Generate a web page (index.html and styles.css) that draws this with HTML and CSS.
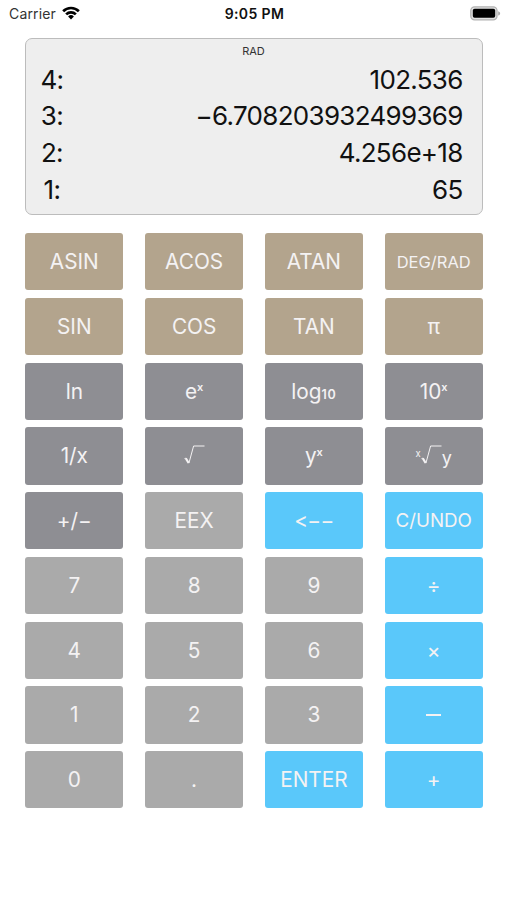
FILE: index.html
```html
<!DOCTYPE html>
<html lang="en">
  <head>
    <meta charset="UTF-8" />
    <title>RPN Calculator</title>
    <link rel="stylesheet" href="styles.css">
  </head>
  <body>
    <div class="status-bar">
      <div class="carrier">
        <span class="carrier-name">Carrier</span>
        <svg class="wifi" viewBox="0 0 18 14">
          <path d="M0.2 4.3A12.6 12.6 0 0 1 17.8 4.3L15.9 6.2A9.8 9.8 0 0 0 2.1 6.2Z" />
          <path d="M3.2 7.4A8.4 8.4 0 0 1 14.8 7.4L12.9 9.3A5.6 5.6 0 0 0 5.1 9.3Z" />
          <path d="M6.1 10.4A4.1 4.1 0 0 1 11.9 10.4L9 13.4Z" />
        </svg>
      </div>
      <div class="time">9:05 PM</div>
      <div class="battery-area">
        <svg class="battery" viewBox="0 0 31 15">
          <rect x="0.8" y="0.8" width="26.2" height="13" rx="3.8" fill="#e2e2e2" stroke="#b2b2b2" stroke-width="1.3" />
          <rect x="2.8" y="2.8" width="22.4" height="9" rx="1.8" fill="#000" />
          <path d="M28.2 5.2C30.8 6 30.8 8.8 28.2 9.6Z" fill="#aaa" />
        </svg>
      </div>
    </div>

    <div class="calculator">
      <div class="display">
        <div class="mode">RAD</div>
        <div class="stack-row"><span class="level">4:</span><span class="value">102.536</span></div>
        <div class="stack-row"><span class="level">3:</span><span class="value">−6.708203932499369</span></div>
        <div class="stack-row"><span class="level">2:</span><span class="value">4.256e+18</span></div>
        <div class="stack-row"><span class="level">1:</span><span class="value">65</span></div>
      </div>

      <div class="keypad">
        <button class="key trig">ASIN</button>
        <button class="key trig">ACOS</button>
        <button class="key trig">ATAN</button>
        <button class="key trig key-small">DEG/RAD</button>

        <button class="key trig">SIN</button>
        <button class="key trig">COS</button>
        <button class="key trig">TAN</button>
        <button class="key trig">π</button>

        <button class="key func">ln</button>
        <button class="key func">e<span class="sup">x</span></button>
        <button class="key func">log<span class="sub">10</span></button>
        <button class="key func">10<span class="sup">x</span></button>

        <button class="key func">1/x</button>
        <button class="key func">
          <svg class="root" viewBox="0 0 21 20"><path class="root-tick" d="M1.8 13.2L4.6 18" /><path d="M0.5 13.6L1.8 13.2M4.9 18.2L9.6 1H20.5" /></svg>
        </button>
        <button class="key func">y<span class="sup">x</span></button>
        <button class="key func">
          <span class="root-index">x</span>
          <svg class="root" viewBox="0 0 21 20"><path class="root-tick" d="M1.8 13.2L4.6 18" /><path d="M0.5 13.6L1.8 13.2M4.9 18.2L9.6 1H20.5" /></svg>
          <span class="root-arg">y</span>
        </button>

        <button class="key func">+/−</button>
        <button class="key num">EEX</button>
        <button class="key action key-arrow">&lt;−−</button>
        <button class="key action key-medium">C/UNDO</button>

        <button class="key num">7</button>
        <button class="key num">8</button>
        <button class="key num">9</button>
        <button class="key action">÷</button>

        <button class="key num">4</button>
        <button class="key num">5</button>
        <button class="key num">6</button>
        <button class="key action">×</button>

        <button class="key num">1</button>
        <button class="key num">2</button>
        <button class="key num">3</button>
        <button class="key action"><span class="minus"></span></button>

        <button class="key num">0</button>
        <button class="key num">.</button>
        <button class="key action">ENTER</button>
        <button class="key action">+</button>
      </div>
    </div>
  </body>
</html>
```
FILE: styles.css
```css
* {
  margin: 0;
  padding: 0;
  box-sizing: border-box;
}

body {
  font-family: Inter, Roboto, sans-serif;
  background-color: #fff;
  color: #111;
}

.status-bar {
  display: grid;
  grid-template-columns: 1fr auto 1fr;
  align-items: center;
  height: 27px;
  padding: 0 6px 0 9px;
}

.carrier {
  display: flex;
  align-items: center;
  gap: 6px;
  padding-bottom: 1px;
}

.carrier-name {
  font-size: 14px;
  letter-spacing: 0.15px;
  color: #333;
}

.wifi {
  width: 18px;
  height: 14px;
  fill: #000;
}

.time {
  font-size: 14px;
  font-weight: 600;
  letter-spacing: 0.4px;
  padding-right: 1px;
}

.battery-area {
  display: flex;
  justify-content: flex-end;
}

.battery {
  width: 31px;
  height: 15px;
}

.calculator {
  padding: 10.5px 24.4px 0 25.4px;
}

.display {
  height: 177.5px;
  padding: 5px 19px 0 14px;
  background-color: #eee;
  border: 1px solid #bcbcbc;
  border-radius: 7px;
}

.mode {
  height: 18px;
  line-height: 15px;
  font-size: 11px;
  text-align: center;
  color: #333;
  padding-left: 4px;
}

.stack-row {
  display: flex;
  justify-content: space-between;
  height: 36.7px;
  line-height: 36.7px;
  font-size: 26px;
  letter-spacing: -0.7px;
}

.level {
  width: 23px;
  text-align: center;
  white-space: nowrap;
}

.value {
  text-align: right;
}

.keypad {
  display: grid;
  grid-template-columns: repeat(4, 1fr);
  grid-auto-rows: 57.2px;
  column-gap: 22px;
  row-gap: 7.55px;
  margin-top: 18.2px;
}

.key {
  display: flex;
  align-items: center;
  justify-content: center;
  border: none;
  border-radius: 3px;
  font-family: inherit;
  font-size: 20.8px;
  color: #f4f2f3;
}

.trig {
  background-color: #b3a48d;
}

.func {
  background-color: #8e8e93;
}

.num {
  background-color: #aaa;
}

.action {
  background-color: #5ac8fa;
}

.key-small {
  font-size: 16.5px;
}

.key-medium {
  font-size: 18.8px;
}

.key-arrow {
  letter-spacing: -0.6px;
}

.sup {
  font-size: 11px;
  font-weight: 600;
  margin-bottom: 8px;
}

.sub {
  font-size: 12.5px;
  font-weight: 600;
  letter-spacing: 0.7px;
  margin-top: 6px;
}

.root {
  width: 21px;
  height: 20px;
  fill: none;
  stroke: #f4f2f3;
  stroke-width: 1;
  margin-bottom: 2px;
}

.root-tick {
  stroke-width: 2.2;
}

.root-index {
  font-size: 9.5px;
  margin-bottom: 5px;
}

.root-arg {
  font-size: 18px;
  margin-top: 3px;
}

.minus {
  width: 15px;
  height: 2px;
  background-color: #f4f2f3;
}
```
